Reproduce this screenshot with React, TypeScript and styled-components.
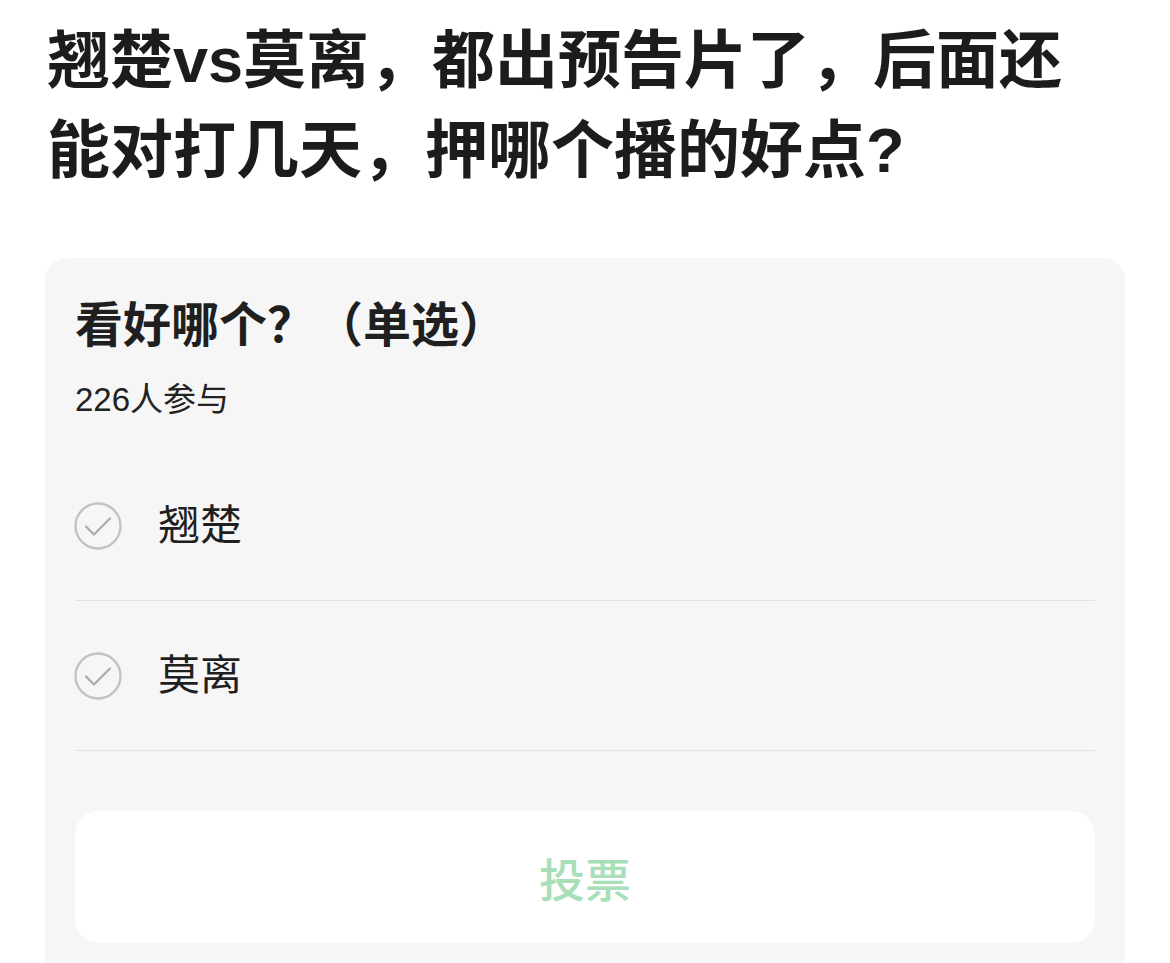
import React from "react";
import styled, { createGlobalStyle } from "styled-components";

const GlobalStyle = createGlobalStyle`
  html, body {
    margin: 0;
    padding: 0;
    background: #ffffff;
  }
  body {
    font-family: "Liberation Sans", "Noto Sans CJK SC", sans-serif;
    color: #1f1f1f;
  }
`;

const Page = styled.main`
  width: 1170px;
  min-height: 963px;
  overflow: hidden;
  background: #ffffff;
`;

const Title = styled.h1`
  margin: 15px 60px 0 47px;
  font-size: 63px;
  line-height: 90px;
  font-weight: 700;
  color: #1c1c1c;
`;

const PollCard = styled.section`
  margin: 63px 45px 0 45px;
  padding: 36px 30px 40px 30px;
  background: #f6f6f6;
  border-radius: 22px;
`;

const PollHeading = styled.h2`
  margin: 0;
  font-size: 48px;
  line-height: 64px;
  font-weight: 700;
  color: #1f1f1f;
`;

const Participants = styled.div`
  margin-top: 20px;
  font-size: 33px;
  line-height: 44px;
  color: #222222;
`;

const OptionList = styled.ul`
  list-style: none;
  margin: 29px 0 0 0;
  padding: 0;
`;

const OptionRow = styled.li`
  display: flex;
  align-items: center;
  height: 149px;
  border-bottom: 1px solid #e2e2e2;
`;

const CheckMark = styled.svg`
  flex: none;
  width: 48px;
  height: 48px;
  margin-left: -1px;
`;

const OptionLabel = styled.span`
  margin-left: 36px;
  font-size: 42px;
  line-height: 60px;
  color: #1f1f1f;
`;

const VoteButton = styled.button`
  display: flex;
  align-items: center;
  justify-content: center;
  width: 100%;
  height: 132px;
  margin-top: 60px;
  border: none;
  border-radius: 24px;
  background: #ffffff;
  font-family: "Noto Sans CJK SC", sans-serif;
  font-size: 46px;
  font-weight: 500;
  color: #a8dfb8;
  cursor: pointer;
`;

const CheckIcon = () => (
  <CheckMark viewBox="0 0 48 48" aria-hidden="true">
    <circle cx="24" cy="24" r="22.5" fill="none" stroke="#c2c2c2" strokeWidth="2.3" />
    <path
      d="M12 24.5 L20 32.5 L36 16.5"
      fill="none"
      stroke="#acacac"
      strokeWidth="2.3"
      strokeLinecap="round"
      strokeLinejoin="round"
    />
  </CheckMark>
);

const options = ["翘楚", "莫离"];

export default function App() {
  return (
    <Page>
      <GlobalStyle />
      <Title>翘楚vs莫离，都出预告片了，后面还能对打几天，押哪个播的好点?</Title>
      <PollCard>
        <PollHeading>看好哪个？（单选）</PollHeading>
        <Participants>226人参与</Participants>
        <OptionList>
          {options.map((o) => (
            <OptionRow key={o}>
              <CheckIcon />
              <OptionLabel>{o}</OptionLabel>
            </OptionRow>
          ))}
        </OptionList>
        <VoteButton type="button">投票</VoteButton>
      </PollCard>
    </Page>
  );
}
